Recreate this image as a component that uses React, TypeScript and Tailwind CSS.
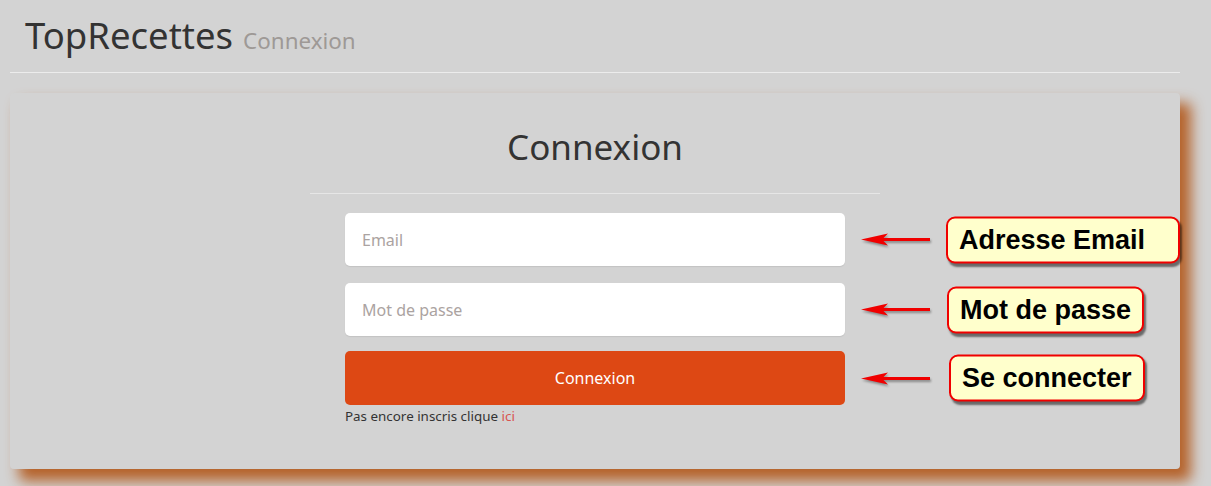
import React from 'react';

const font = { fontFamily: '"Noto Sans", "Open Sans", sans-serif' };

const Arrow = () => (
  <svg width="72" height="20" viewBox="0 0 72 20" className="drop-shadow-[1px_2px_1px_rgba(0,0,0,0.35)]">
    <line x1="20" y1="10" x2="70" y2="10" stroke="#f00000" strokeWidth="3" />
    <path d="M1 10 L28 4 L22 10 L28 16 Z" fill="#f00000" />
  </svg>
);

const Callout = ({ text, width }: { text: string; width: string }) => (
  <div
    className={`${width} h-[47px] flex items-center pl-[11px] bg-[#ffffcc] border-2 border-[#f00000] rounded-[9px] shadow-[2px_3px_2px_rgba(0,0,0,0.5)] text-[27px] font-bold text-black`}
    style={{ fontFamily: '"Liberation Sans", Arial, sans-serif' }}
  >
    {text}
  </div>
);

const Note = ({ text, width, shift }: { text: string; width: string; shift: string }) => (
  <div className="absolute left-[515px] top-1/2 -translate-y-1/2 flex items-center">
    <Arrow />
    <div className={shift}>
      <Callout text={text} width={width} />
    </div>
  </div>
);

export default function App() {
  return (
    <div className="min-h-[486px] bg-[#d3d3d3] px-[10px] overflow-hidden" style={font}>
      <div className="w-[1170px] pl-[15px] pt-[10px] pb-[12px] border-b border-[#ececec] flex items-baseline gap-[10px]">
        <span className="text-[36.5px] leading-[50px] text-[#333333]">TopRecettes</span>
        <span className="text-[22.4px] text-[#9e9996]">Connexion</span>
      </div>

      <div className="mt-[20px] h-[376px] w-[1170px] rounded-[4px] bg-[#d3d3d3] shadow-[10px_11px_14px_1px_rgba(181,98,42,1)] flex flex-col items-center pt-[29px]">
        <h2 className="text-[35px] leading-[50px] text-[#333333]">Connexion</h2>
        <div className="w-[570px] border-b border-[#e6e6e6] mt-[21px]" />

        <div className="w-[500px] mt-[19px] flex flex-col gap-[17px]">
          <div className="relative">
            <input
              placeholder="Email"
              className="w-full h-[53px] rounded-[5px] bg-white px-[17px] text-[16px] text-[#333] placeholder:text-[#aba3a1] outline-none shadow-[0_1px_1px_rgba(0,0,0,0.08)]"
              style={font}
            />
            <Note text="Adresse Email" width="w-[234px]" shift="ml-[14px]" />
          </div>
          <div className="relative">
            <input
              type="password"
              placeholder="Mot de passe"
              className="w-full h-[53px] rounded-[5px] bg-white px-[17px] text-[16px] text-[#333] placeholder:text-[#aba3a1] outline-none shadow-[0_1px_1px_rgba(0,0,0,0.08)]"
              style={font}
            />
            <Note text="Mot de passe" width="w-[197px]" shift="ml-[15px]" />
          </div>
          <div className="relative -mt-[2px]">
            <button className="w-full h-[54px] rounded-[5px] bg-[#dd4814] text-white text-[16px]" style={font}>
              Connexion
            </button>
            <Note text="Se connecter" width="w-[196px]" shift="ml-[17px]" />
          </div>
        </div>
        <div className="w-[500px] mt-[1px] text-[13.4px] text-[#333333]">
          Pas encore inscris clique <span className="text-[#d9534f]">ici</span>
        </div>
      </div>
    </div>
  );
}
